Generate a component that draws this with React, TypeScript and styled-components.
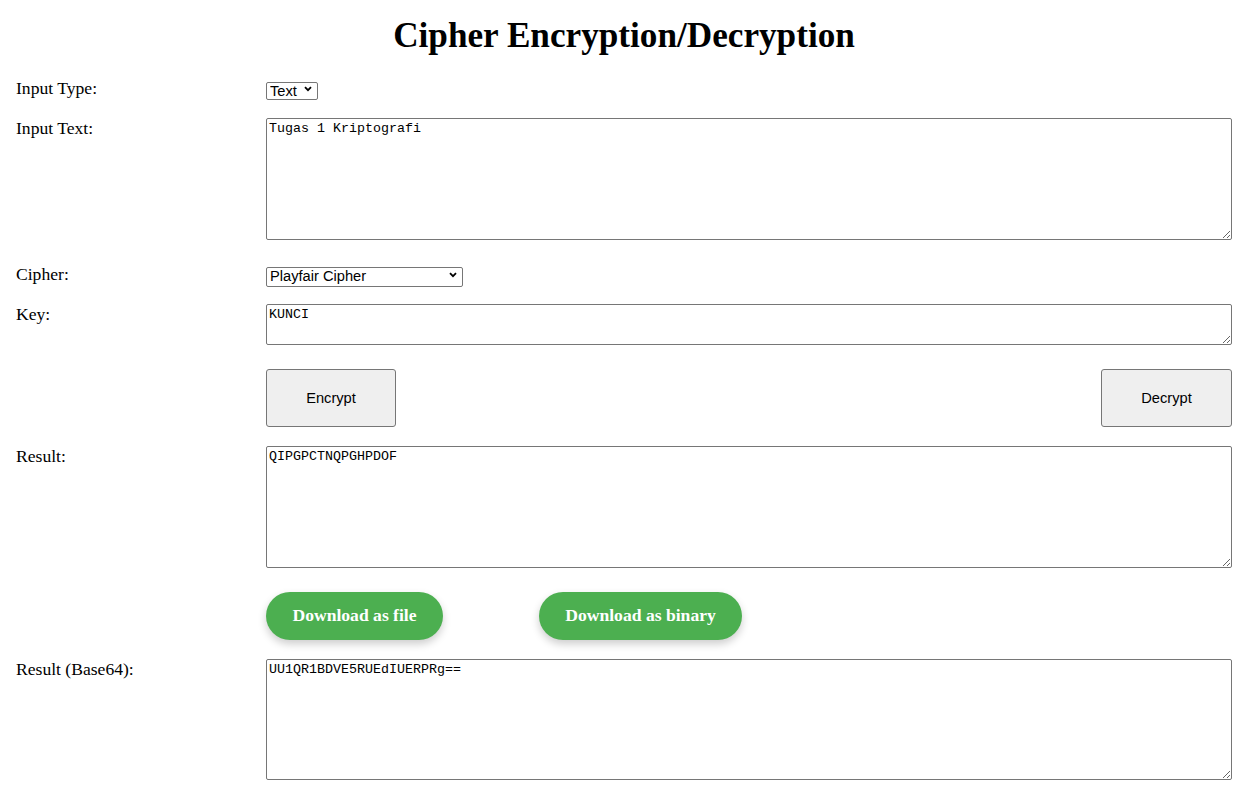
import React, { useState } from "react";
import styled, { createGlobalStyle } from "styled-components";

const GlobalStyle = createGlobalStyle`
  html, body { margin: 0; padding: 0; background: #ffffff; }
  body { font-family: "Liberation Serif", "Times New Roman", serif; font-size: 17.6px; color: #000; }
`;

const Page = styled.div`
  padding: 17px 10px 8px 16px;
  display: flex;
  flex-direction: column;
`;

const Title = styled.h1`
  margin: 0 0 26px 0;
  text-align: center;
  font-family: "Liberation Serif", "Times New Roman", serif;
  font-weight: bold;
  font-size: 35.2px;
  line-height: 37px;
`;

const Row = styled.div<{ $top?: number }>`
  display: flex;
  align-items: flex-start;
  margin-top: ${(p) => p.$top ?? 0}px;
`;

const Label = styled.label<{ $pad?: number; $lh?: number }>`
  flex: 0 0 250px;
  font-size: 17.6px;
  line-height: ${(p) => p.$lh ?? 18}px;
  padding-top: ${(p) => p.$pad ?? 0}px;
`;

const Field = styled.div`
  flex: 1;
  display: flex;
  min-width: 0;
`;

const SelectWrap = styled.div<{ $w: number; $h: number }>`
  position: relative;
  width: ${(p) => p.$w}px;
  height: ${(p) => p.$h}px;
`;

const Select = styled.select`
  appearance: none;
  -webkit-appearance: none;
  width: 100%;
  height: 100%;
  box-sizing: border-box;
  border: 1px solid #767676;
  border-radius: 2px;
  background: #fff;
  color: #000;
  font-family: "Liberation Sans", Arial, sans-serif;
  font-size: 14.67px;
  line-height: 16px;
  padding: 0 18px 1px 3px;
  margin: 0;
  outline: none;
`;

const Chevron = styled.svg`
  position: absolute;
  right: 6px;
  top: 50%;
  width: 8px;
  height: 6px;
  margin-top: -3px;
  pointer-events: none;
`;

const TextArea = styled.textarea<{ $h: number }>`
  width: 100%;
  height: ${(p) => p.$h}px;
  box-sizing: border-box;
  border: 1px solid #767676;
  border-radius: 2px;
  padding: 2px;
  margin: 0;
  font-family: "Liberation Mono", "Courier New", monospace;
  font-size: 13.33px;
  line-height: 16px;
  color: #000;
  background: #fff;
  resize: both;
  outline: none;
`;

const ButtonBar = styled.div`
  flex: 1;
  display: flex;
  justify-content: space-between;
`;

const ActionButton = styled.button<{ $w: number }>`
  width: ${(p) => p.$w}px;
  height: 58px;
  background: #efefef;
  border: 1px solid #767676;
  border-radius: 3px;
  font-family: "Liberation Sans", Arial, sans-serif;
  font-size: 14.67px;
  color: #000;
  padding: 0;
  cursor: pointer;
`;

const DownloadBar = styled.div`
  display: flex;
  gap: 96px;
`;

const DownloadButton = styled.button<{ $w: number }>`
  width: ${(p) => p.$w}px;
  height: 48px;
  background: #4caf50;
  color: #fff;
  border: none;
  border-radius: 24px;
  font-family: "Liberation Serif", "Times New Roman", serif;
  font-weight: bold;
  font-size: 17.6px;
  line-height: 20px;
  box-shadow: 0 4px 8px rgba(0, 0, 0, 0.2);
  padding: 0 0 2px 0;
  cursor: pointer;
`;

function Dropdown({ w, h, value, options }: { w: number; h: number; value: string; options: string[] }) {
  const [v, setV] = useState(value);
  return (
    <SelectWrap $w={w} $h={h}>
      <Select value={v} onChange={(e) => setV(e.target.value)}>
        {options.map((o) => (
          <option key={o} value={o}>
            {o}
          </option>
        ))}
      </Select>
      <Chevron viewBox="0 0 8 6">
        <path d="M1 1.2 L4 4.2 L7 1.2" fill="none" stroke="#000" strokeWidth="1.8" />
      </Chevron>
    </SelectWrap>
  );
}

export default function App() {
  return (
    <>
      <GlobalStyle />
      <Page>
        <Title>Cipher Encryption/Decryption</Title>

        <Row>
          <Label $lh={16}>Input Type:</Label>
          <Field>
            <Dropdown w={52} h={18} value="Text" options={["Text", "File"]} />
          </Field>
        </Row>

        <Row $top={20}>
          <Label $pad={1}>Input Text:</Label>
          <Field>
            <TextArea $h={122} defaultValue="Tugas 1 Kriptografi" />
          </Field>
        </Row>

        <Row $top={25}>
          <Label $lh={16} $pad={1}>Cipher:</Label>
          <Field>
            <Dropdown
              w={197}
              h={20}
              value="Playfair Cipher"
              options={["Vigenere Cipher", "Playfair Cipher", "Affine Cipher", "Hill Cipher"]}
            />
          </Field>
        </Row>

        <Row $top={19}>
          <Label $pad={1}>Key:</Label>
          <Field>
            <TextArea $h={41} defaultValue="KUNCI" />
          </Field>
        </Row>

        <Row $top={24}>
          <Label />
          <ButtonBar>
            <ActionButton $w={130}>Encrypt</ActionButton>
            <ActionButton $w={131}>Decrypt</ActionButton>
          </ButtonBar>
        </Row>

        <Row $top={19}>
          <Label $pad={1}>Result:</Label>
          <Field>
            <TextArea $h={122} defaultValue="QIPGPCTNQPGHPDOF" />
          </Field>
        </Row>

        <Row $top={24}>
          <Label />
          <DownloadBar>
            <DownloadButton $w={177}>Download as file</DownloadButton>
            <DownloadButton $w={203}>Download as binary</DownloadButton>
          </DownloadBar>
        </Row>

        <Row $top={19}>
          <Label $pad={1}>Result (Base64):</Label>
          <Field>
            <TextArea $h={121} defaultValue="UU1QR1BDVE5RUEdIUERPRg==" />
          </Field>
        </Row>
      </Page>
    </>
  );
}
